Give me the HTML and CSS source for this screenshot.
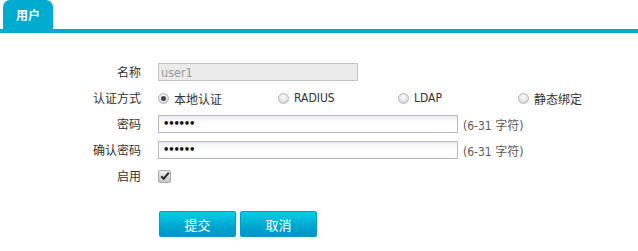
FILE: index.html
```html
<!DOCTYPE html>
<html lang="zh-CN">
<head>
<meta charset="utf-8">
<title>用户</title>
<link rel="stylesheet" href="styles.css">
</head>
<body>
<div class="tabbar">
  <div class="tab">用户</div>
</div>
<form class="form">
  <div class="grid">
    <label class="lbl">名称</label>
    <div class="ctl"><input class="txt txt-name" type="text" value="user1" disabled></div>

    <label class="lbl">认证方式</label>
    <div class="ctl radios">
      <span class="ropt"><span class="radio on"></span>本地认证</span>
      <span class="ropt"><span class="radio"></span><span class="lat">RADIUS</span></span>
      <span class="ropt"><span class="radio"></span><span class="lat">LDAP</span></span>
      <span class="ropt"><span class="radio"></span>静态绑定</span>
    </div>

    <label class="lbl">密码</label>
    <div class="ctl"><span class="txt txt-pw"><span class="dots">••••••</span></span><span class="hint">(6-31 字符)</span></div>

    <label class="lbl">确认密码</label>
    <div class="ctl"><span class="txt txt-pw"><span class="dots">••••••</span></span><span class="hint">(6-31 字符)</span></div>

    <label class="lbl">启用</label>
    <div class="ctl">
      <span class="check">
        <svg width="12" height="12" viewBox="0 0 12 12"><path d="M2.3 6.2 L4.7 8.7 L9.8 2.6" fill="none" stroke="#2a2a2a" stroke-width="2"/></svg>
      </span>
    </div>
  </div>
  <div class="btns">
    <button type="button" class="btn">提交</button>
    <button type="button" class="btn">取消</button>
  </div>
</form>
</body>
</html>
```
FILE: styles.css
```css
html, body {
  margin: 0;
  padding: 0;
  background: #fff;
}
body {
  font-family: "DejaVu Sans Condensed", "Noto Sans CJK SC", sans-serif;
  font-size: 12px;
  color: #333;
}
.tabbar {
  height: 29px;
  border-bottom: 4px solid #00abd0;
  padding-left: 3px;
  display: flex;
  align-items: flex-end;
}
.tab {
  width: 50px;
  height: 29px;
  background: #00abd0;
  border-radius: 7px 7px 0 0;
  color: #fff;
  font-family: "Noto Sans CJK SC", sans-serif;
  font-weight: bold;
  font-size: 12px;
  display: flex;
  align-items: center;
  justify-content: center;
  padding-bottom: 1px;
  box-sizing: border-box;
}
.form {
  margin: 0;
  padding-top: 26px;
}
.grid {
  display: grid;
  grid-template-columns: 141px auto;
  grid-auto-rows: 26px;
  column-gap: 17px;
  align-items: center;
}
.lbl {
  text-align: right;
  font-family: "Noto Sans CJK SC", sans-serif;
  font-size: 12px;
  color: #333;
  line-height: 16px;
}
.ctl {
  display: flex;
  align-items: center;
  height: 26px;
}
.txt {
  box-sizing: border-box;
  height: 18px;
  border: 1px solid #b9b9c6;
  background: linear-gradient(#ececf0 0, #fafafa 4px, #fff 8px);
  display: flex;
  align-items: center;
  padding: 0 4px;
}
.txt-name {
  width: 200px;
  background: #ebebeb;
  border-color: #c3c3c3;
  color: #9a9a9a;
  font-family: "DejaVu Sans Condensed", sans-serif;
  font-size: 12.5px;
  padding: 0 2px;
  margin: 0;
  border-radius: 0;
}
.txt-pw {
  width: 300px;
}
.dots {
  font-family: "DejaVu Sans", sans-serif;
  font-size: 10px;
  letter-spacing: -1.2px;
  color: #111;
  line-height: 1;
  font-weight: bold;
}
.hint {
  margin-left: 5px;
  color: #5a5a5a;
  font-family: "DejaVu Sans Condensed", "Noto Sans CJK SC", sans-serif;
}
.radios {
  display: flex;
}
.ropt {
  width: 120px;
  display: flex;
  align-items: center;
  font-family: "Noto Sans CJK SC", sans-serif;
}
.lat {
  font-family: "DejaVu Sans Condensed", sans-serif;
}
.radio {
  box-sizing: border-box;
  width: 11px;
  height: 11px;
  border-radius: 50%;
  border: 1px solid #b5b5b5;
  background: radial-gradient(circle at 50% 35%, #fbfbfb 0, #dcdcdc 70%, #cfcfcf 100%);
  margin-right: 5px;
  position: relative;
  flex: none;
}
.radio.on::after {
  content: "";
  position: absolute;
  left: 2px;
  top: 2px;
  width: 5px;
  height: 5px;
  border-radius: 50%;
  background: #444;
}
.check {
  box-sizing: border-box;
  width: 13px;
  height: 13px;
  border: 1px solid #aaa;
  border-radius: 2px;
  background: linear-gradient(#f0f0f0, #c8c8c8);
  display: flex;
  align-items: center;
  justify-content: center;
  position: relative;
}
.check svg {
  display: block;
  flex: none;
}
.btns {
  display: flex;
  gap: 4px;
  margin-top: 22px;
  padding-left: 159px;
}
.btn {
  box-sizing: border-box;
  width: 77px;
  height: 26px;
  border: 1px solid #079ac4;
  border-radius: 2px;
  background: linear-gradient(#00cfe6, #00a6d0 60%, #0095c3);
  box-shadow: 0 1px 1px #b8c8d0;
  color: #fff;
  font-family: "Noto Sans CJK SC", sans-serif;
  font-size: 13px;
  padding: 0;
  margin: 0;
}
```
